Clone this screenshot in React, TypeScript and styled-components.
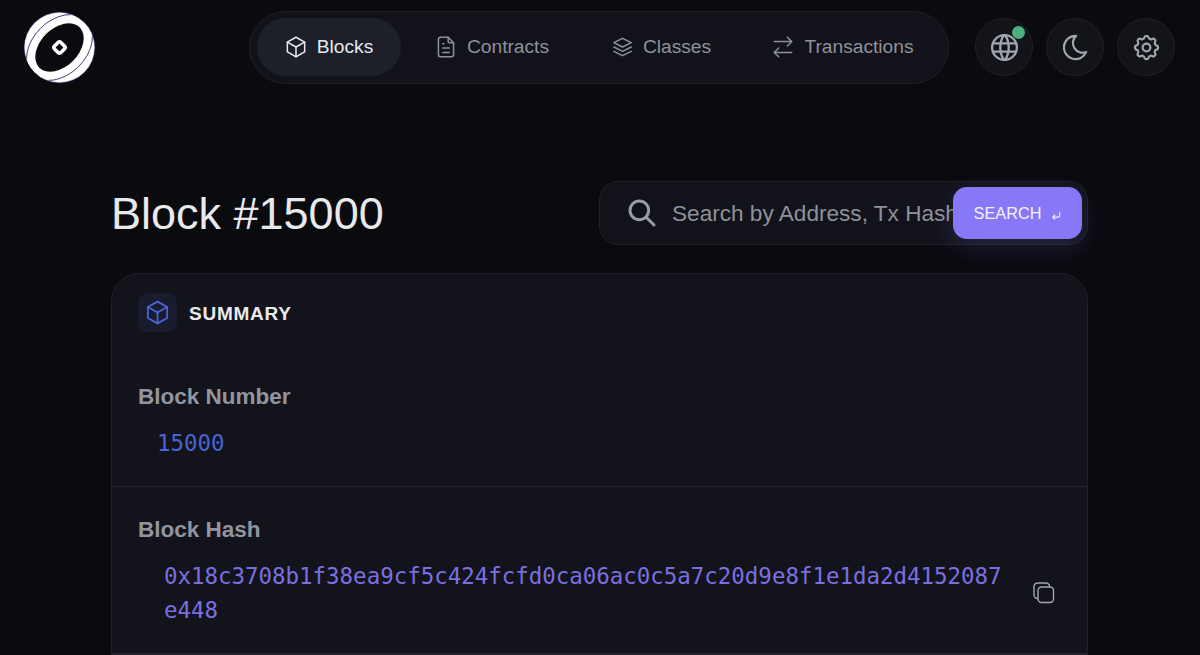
import React from 'react';
import styled, { createGlobalStyle } from 'styled-components';
import { TbBox, TbFileText, TbWorld, TbMoon, TbSettings, TbSearch, TbCornerDownLeft } from 'react-icons/tb';
import { ArrowRightLeft } from 'lucide-react';

const GlobalStyle = createGlobalStyle`
  html, body {
    margin: 0;
    height: 655px;
    overflow: hidden;
    background: #0a0b0f;
    font-family: "Liberation Sans", Arial, sans-serif;
  }
  * { box-sizing: border-box; }
`;

const Page = styled.div`
  width: 1200px;
  height: 655px;
  overflow: hidden;
`;

const Header = styled.header`
  display: flex;
  align-items: center;
  padding: 11px 25px 0 24px;
  height: 83px;
`;

const Logo = styled.svg`
  width: 71px;
  height: 71px;
  flex-shrink: 0;
`;

const Nav = styled.nav`
  display: flex;
  align-items: center;
  width: 700px;
  height: 73px;
  margin-left: 154px;
  padding-left: 7px;
  background: #12131a;
  border: 1px solid #1f2028;
  border-radius: 37px;
`;

const NavItem = styled.div<{ $active?: boolean; $width: number }>`
  display: flex;
  flex-shrink: 0;
  align-items: center;
  justify-content: center;
  gap: 8px;
  width: ${props => props.$width}px;
  height: 58px;
  padding-right: ${props => props.$active ? 2 : 0}px;
  border-radius: 29px;
  font-size: 19.2px;
  color: ${props => props.$active ? '#e5e7eb' : '#8f9198'};
  background: ${props => props.$active ? '#1e2029' : 'transparent'};
`;

const NavIcon = styled.span`
  display: flex;

  svg {
    width: 26px;
    height: 26px;
    stroke-width: 1.4;
  }
`;

const Actions = styled.div`
  display: flex;
  gap: 13px;
  margin-left: 26px;
`;

const RoundButton = styled.div<{ $iconSize: number }>`
  position: relative;
  display: flex;
  align-items: center;
  justify-content: center;
  width: 58px;
  height: 58px;
  border-radius: 50%;
  background: #13141a;
  border: 1px solid #1f2028;
  color: #a3a5ad;

  svg {
    width: ${props => props.$iconSize}px;
    height: ${props => props.$iconSize}px;
    stroke-width: 1.7;
  }
`;

const StatusDot = styled.span`
  position: absolute;
  top: 7px;
  right: 7px;
  width: 13px;
  height: 13px;
  border-radius: 50%;
  background: #4fb07f;
`;

const Main = styled.main`
  width: 977px;
  margin: 98px 0 0 111px;
`;

const TitleRow = styled.div`
  display: flex;
  align-items: center;
  justify-content: space-between;
  height: 64px;
`;

const Title = styled.h1`
  margin: 0;
  padding-top: 2px;
  font-size: 45px;
  font-weight: 400;
  color: #e8e9ec;
`;

const SearchBox = styled.div`
  position: relative;
  display: flex;
  align-items: center;
  gap: 14px;
  width: 489px;
  height: 64px;
  padding: 0 26px;
  background: #12131a;
  border: 1px solid #1f2028;
  border-radius: 19px;
  color: #9a9ca4;

  > svg {
    width: 32px;
    height: 32px;
    flex-shrink: 0;
    stroke-width: 2.2;
  }
`;

const SearchInput = styled.input`
  flex: 1;
  min-width: 0;
  padding: 2px 0 0;
  border: none;
  outline: none;
  background: transparent;
  font: inherit;
  font-size: 22.6px;
  color: #9a9ca4;

  &::placeholder { color: #8f9198; opacity: 1; }
`;

const SearchButton = styled.button`
  position: absolute;
  top: 5px;
  right: 5px;
  display: flex;
  align-items: center;
  justify-content: center;
  gap: 9px;
  width: 129px;
  height: 52px;
  padding: 0 0 0 2px;
  border: none;
  border-radius: 14px;
  background: #8778f7;
  color: #f3f2ff;
  font: inherit;
  font-size: 16.3px;
  box-shadow: 0 8px 24px rgba(135, 120, 247, 0.18);

  svg {
    width: 13px;
    height: 13px;
    margin-top: 5px;
  }
`;

const Card = styled.section`
  margin-top: 28px;
  background: #13141b;
  border: 1px solid #1f2028;
  border-radius: 28px 28px 0 0;
`;

const CardHeader = styled.div`
  display: flex;
  align-items: center;
  gap: 12px;
  padding: 19px 26px 0;
`;

const CardIcon = styled.div`
  display: flex;
  align-items: center;
  justify-content: center;
  width: 39px;
  height: 39px;
  border-radius: 10px;
  background: #181c2c;
  color: #4a64d8;

  svg {
    width: 29px;
    height: 29px;
    stroke-width: 1.5;
  }
`;

const CardTitle = styled.h2`
  margin: 0;
  padding-top: 2px;
  font-size: 19px;
  font-weight: 700;
  letter-spacing: 0.75px;
  color: #e8e9ec;
`;

const Row = styled.div<{ $top: number; $height: number }>`
  height: ${props => props.$height}px;
  padding: ${props => props.$top}px 26px 0;
  border-bottom: 1px solid #25262e;
`;

const Label = styled.div`
  font-size: 22.5px;
  font-weight: 700;
  line-height: 28px;
  color: #92959e;
`;

const NumberValue = styled.div`
  margin: 18px 0 0 19px;
  font-family: "DejaVu Sans Mono", "Liberation Mono", monospace;
  font-size: 22.45px;
  line-height: 28px;
  color: #4a64d8;
`;

const HashRow = styled.div`
  display: flex;
  align-items: center;
  margin: 15px 0 0 26px;
`;

const HashValue = styled.div`
  width: 843px;
  font-family: "DejaVu Sans Mono", "Liberation Mono", monospace;
  font-size: 22.45px;
  line-height: 34px;
  color: #7b6fe0;
  word-break: break-all;
`;

const CopyButton = styled.div`
  display: flex;
  margin-left: 26px;
  color: #a3a5ad;
`;

const StackIcon = () => (
  <svg viewBox="0 0 24 24" fill="none" stroke="currentColor" strokeLinecap="round" strokeLinejoin="round">
    <path d="M12.5 4 L20.5 8 L12.5 12 L4.5 8 Z" />
    <path d="M4.5 12 L12.5 16 L20.5 12" />
    <path d="M4.5 16 L12.5 20 L20.5 16" />
  </svg>
);

const CopyIcon = () => (
  <svg width="22" height="22" viewBox="0 0 22 22" fill="none" stroke="currentColor" strokeWidth="1.4">
    <rect x="5" y="5" width="15.5" height="15.5" rx="3.5" />
    <path d="M5 16.5 H4.5 A3.5 3.5 0 0 1 1 13 V4.5 A3.5 3.5 0 0 1 4.5 1 H13 A3.5 3.5 0 0 1 16.5 4.5 V5" />
  </svg>
);

const navItems = [
  { label: 'Blocks', icon: <TbBox />, width: 144, active: true },
  { label: 'Contracts', icon: <TbFileText />, width: 180 },
  { label: 'Classes', icon: <StackIcon />, width: 158 },
  { label: 'Transactions', icon: <ArrowRightLeft />, width: 206 },
];

const App: React.FC = () => {
  return (
    <Page>
      <GlobalStyle />
      <Header>
        <Logo viewBox="0 0 71 71">
          <defs>
            <clipPath id="logo-disc"><circle cx="35.5" cy="35.5" r="35" /></clipPath>
          </defs>
          <circle cx="35.5" cy="35.5" r="35" fill="#ffffff" stroke="#b9b0ff" strokeWidth="0.5" />
          <g clipPath="url(#logo-disc)">
            <ellipse cx="35.5" cy="35.5" rx="27" ry="38" transform="rotate(45 35.5 35.5)" fill="#ffffff" stroke="#3d3678" strokeWidth="0.9" />
          </g>
          <ellipse cx="35.5" cy="35.5" rx="19" ry="28.5" transform="rotate(45 35.5 35.5)" fill="#0a0b0f" />
          <rect x="31" y="31" width="9" height="9" rx="2" transform="rotate(45 35.5 35.5)" fill="none" stroke="#ffffff" strokeWidth="3.6" />
        </Logo>
        <Nav>
          {navItems.map(item => (
            <NavItem key={item.label} $active={item.active} $width={item.width}>
              <NavIcon>{item.icon}</NavIcon>
              {item.label}
            </NavItem>
          ))}
        </Nav>
        <Actions>
          <RoundButton $iconSize={33}><TbWorld /><StatusDot /></RoundButton>
          <RoundButton $iconSize={31}><TbMoon /></RoundButton>
          <RoundButton $iconSize={31}><TbSettings /></RoundButton>
        </Actions>
      </Header>
      <Main>
        <TitleRow>
          <Title>Block #15000</Title>
          <SearchBox>
            <TbSearch />
            <SearchInput placeholder="Search by Address, Tx Hash, Block Hash" readOnly />
            <SearchButton>SEARCH <TbCornerDownLeft /></SearchButton>
          </SearchBox>
        </TitleRow>
        <Card>
          <CardHeader>
            <CardIcon><TbBox /></CardIcon>
            <CardTitle>SUMMARY</CardTitle>
          </CardHeader>
          <Row $top={51} $height={155}>
            <Label>Block Number</Label>
            <NumberValue>15000</NumberValue>
          </Row>
          <Row $top={29} $height={167}>
            <Label>Block Hash</Label>
            <HashRow>
              <HashValue>0x18c3708b1f38ea9cf5c424fcfd0ca06ac0c5a7c20d9e8f1e1da2d4152087e448</HashValue>
              <CopyButton><CopyIcon /></CopyButton>
            </HashRow>
          </Row>
        </Card>
      </Main>
    </Page>
  );
};

export default App;
